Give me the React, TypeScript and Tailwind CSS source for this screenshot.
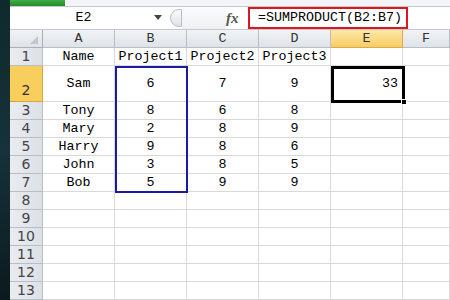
const cols = ["A", "B", "C", "D", "E", "F"];

const rows: string[][] = [
  ["Name", "Project1", "Project2", "Project3", "", ""],
  ["Sam", "6", "7", "9", "33", ""],
  ["Tony", "8", "6", "8", "", ""],
  ["Mary", "2", "8", "9", "", ""],
  ["Harry", "9", "8", "6", "", ""],
  ["John", "3", "8", "5", "", ""],
  ["Bob", "5", "9", "9", "", ""],
  ["", "", "", "", "", ""],
  ["", "", "", "", "", ""],
  ["", "", "", "", "", ""],
  ["", "", "", "", "", ""],
  ["", "", "", "", "", ""],
  ["", "", "", "", "", ""],
];

const mono = { fontFamily: '"Liberation Mono", monospace' };

const App = () => {
  return (
    <div className="flex w-[450px] h-[300px] overflow-hidden bg-white" style={mono}>
      <div className="w-[10px] shrink-0 bg-gradient-to-b from-[#0f2a2c] via-[#16323a] to-[#0b1a1e]" />
      <div className="flex flex-col flex-1 min-w-0">
        <div className="flex h-[7px] border-b border-[#c4c9d0] bg-[#f3f5f8]">
          <div className="w-[55px] bg-gradient-to-b from-[#3fae44] to-[#248a2c]" />
        </div>
        <div className="flex items-center h-[24px] bg-white border-b border-[#c4c9d0]">
          <div className="flex items-center w-[157px] h-full">
            <span className="flex-1 text-center text-[13.33px] pl-[4px] text-black">E2</span>
            <svg width="10" height="6" viewBox="0 0 10 6" className="mr-[4px]">
              <path d="M1 0 L9 0 L5 5 Z" fill="#444" />
            </svg>
          </div>
          <div className="w-[12px] h-[18px] ml-[3px] rounded-l-full border border-[#b9bec6] bg-gradient-to-b from-[#fbfbfc] to-[#dfe2e7]" />
          <div className="flex-1 h-full bg-gradient-to-b from-[#fafbfc] to-[#eef0f3]" />
          <span
            className="w-[22px] text-[15px] italic font-bold text-[#555]"
            style={{ fontFamily: '"Liberation Serif", serif' }}
          >
            fx
          </span>
          <div className="flex items-center w-[160px] h-[22px] border-2 border-[#e0161c] pl-[8px] text-[13.33px] text-black whitespace-nowrap">
            =SUMPRODUCT(B2:B7)
          </div>
          <div className="w-[42px]" />
        </div>
        <div className="relative grid grid-cols-[33px_72px_72px_72px_72px_72px_1fr] grid-rows-[18px_18px_36px_repeat(11,18px)]">
          <div className="relative bg-gradient-to-b from-[#f1f3f6] to-[#dfe3e8] border-r border-b border-[#a9b0ba]">
            <svg width="8" height="8" viewBox="0 0 8 8" className="absolute right-[4px] bottom-[3px]">
              <path d="M8 0 L8 8 L0 8 Z" fill="#c3c8ce" />
            </svg>
          </div>
          {cols.map((c) => (
            <div
              key={c}
              className={
                c === "E"
                  ? "flex items-center justify-center text-[13.33px] text-[#333] bg-gradient-to-b from-[#fde8a6] to-[#f6cd62] border-r border-b border-[#e0a944]"
                  : "flex items-center justify-center text-[13.33px] text-[#333] bg-gradient-to-b from-[#f1f3f6] to-[#dfe3e8] border-r border-b border-[#b8bec6]"
              }
            >
              {c}
            </div>
          ))}
          {rows.map((r, i) => (
            <RowCells key={i} n={i + 1} cells={r} />
          ))}
          <div className="absolute left-[105px] top-[36px] w-[73px] h-[127px] border-2 border-[#1a1aa6]" />
          <div className="absolute left-[321px] top-[36px] w-[74px] h-[37px] border-[3px] border-black" />
          <div className="absolute left-[391px] top-[69px] w-[6px] h-[6px] bg-black border border-white" />
        </div>
      </div>
    </div>
  );
};

const RowCells = ({ n, cells }: { n: number; cells: string[] }) => {
  const active = n === 2;
  return (
    <>
      <div
        className={
          active
            ? "flex items-end justify-center text-[14px] text-[#333] bg-[#f8cf5c] border-r border-b border-[#d9a63b]"
            : "flex items-center justify-center text-[14px] text-[#444] bg-gradient-to-r from-[#e9ecf0] to-[#dde1e6] border-r border-b border-[#b8bec6]"
        }
        style={{ fontFamily: '"DejaVu Sans", sans-serif' }}
      >
        {n}
      </div>
      {cells.map((v, j) => (
        <div
          key={j}
          className={
            j === 4
              ? "flex items-center justify-end pr-[4px] text-[13.33px] text-black border-r border-b border-[#d9d9d9]"
              : "flex items-center justify-center text-[13.33px] text-black border-r border-b border-[#d9d9d9]"
          }
        >
          {v}
        </div>
      ))}
    </>
  );
};

export default App;
